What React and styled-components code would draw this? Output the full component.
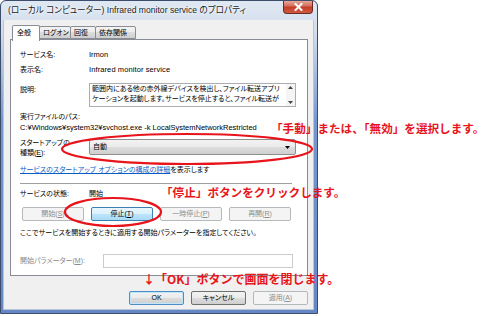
import React from "react";
import styled, { createGlobalStyle } from "styled-components";

const Global = createGlobalStyle`
  html, body { margin: 0; padding: 0; background: #fff; }
  body { font-family: "Liberation Sans", "Noto Sans CJK JP", sans-serif; color: #000; }
  #root { width: 493px; height: 316px; overflow: hidden; }
`;

const Page = styled.div`
  position: relative;
  width: 493px;
  height: 316px;
  background: #fff;
  display: flex;
  align-items: flex-start;
  overflow: hidden;
`;

const Window = styled.div`
  width: 318px;
  height: 314px;
  box-sizing: border-box;
  display: flex;
  flex-direction: column;
  padding: 0 4px 3px 3px;
  border: 1px solid #3b4d6b;
  border-radius: 6px 6px 0 0;
  background: linear-gradient(
    to bottom,
    #dfe8f2 0,
    #d3deec 30px,
    #a9bfe0 70px,
    #7696cd 120px,
    #6687c5 100%
  );
`;

const TitleBar = styled.div`
  height: 19px;
  flex: none;
  display: flex;
  align-items: flex-start;
  padding-left: 4px;
`;

const TitleText = styled.div`
  font-size: 8.6px;
  line-height: 19px;
  font-feature-settings: "palt";
  color: #1b1b1b;
  white-space: nowrap;
  text-shadow: 0 0 4px #fff, 0 0 2px #fff;
`;

const CloseBtn = styled.div`
  margin-left: auto;
  width: 30px;
  height: 13px;
  box-sizing: border-box;
  border: 1px solid #6d2a24;
  border-top: none;
  border-radius: 0 0 4px 4px;
  background: linear-gradient(#e7a898 0, #d4715e 40%, #c23e27 52%, #cf5a3f 100%);
  display: flex;
  align-items: center;
  justify-content: center;
`;

const Client = styled.div`
  flex: 1;
  background: #f0f0f0;
  display: flex;
  flex-direction: column;
  padding: 5px 5px 0 6px;
  border-left: 1px solid #b7c6da;
  border-right: 1px solid #b7c6da;
  border-bottom: 1px solid #b7c6da;
  margin-left: -1px;
  margin-right: -1px;
`;

const TabStrip = styled.div`
  height: 15px;
  display: flex;
  align-items: flex-end;
  padding-left: 2px;
  position: relative;
  z-index: 1;
  margin-bottom: -1px;
`;

const Tab = styled.div`
  box-sizing: border-box;
  width: ${(p) => p.$w}px;
  height: ${(p) => (p.$active ? 16 : 13)}px;
  margin-left: ${(p) => (p.$first ? 0 : -1)}px;
  border: 1px solid #898c95;
  border-bottom: ${(p) => (p.$active ? "none" : "1px solid #898c95")};
  border-radius: 2px 2px 0 0;
  background: ${(p) =>
    p.$active ? "#fff" : "linear-gradient(#f3f3f3 0, #ebebeb 45%, #dddddd 50%, #cfcfcf 100%)"};
  font-size: 7px;
  font-feature-settings: "palt";
  line-height: ${(p) => (p.$active ? 14 : 11)}px;
  padding-left: ${(p) => (p.$active ? 4 : 3)}px;
  white-space: nowrap;
  position: relative;
  z-index: ${(p) => (p.$active ? 2 : 1)};
  align-self: flex-end;
  margin-bottom: ${(p) => (p.$active ? -1 : 1)}px;
`;

const Panel = styled.div`
  box-sizing: border-box;
  height: 237px;
  flex: none;
  border: 1px solid #898c95;
  background: #fff;
  padding: 10px 11px 0 9px;
  display: flex;
  flex-direction: column;
  font-size: 7px;
  font-feature-settings: "palt";
`;

const Row = styled.div`
  display: flex;
  align-items: flex-start;
  margin-top: ${(p) => p.$mt || 0}px;
  min-height: ${(p) => p.$h || 10}px;
  line-height: 10px;
  white-space: nowrap;
  padding-left: ${(p) => p.$pl || 0}px;
  gap: ${(p) => p.$gap || 0}px;
`;

const Label = styled.div`
  width: ${(p) => p.$w || 69}px;
  flex: none;
  margin-top: ${(p) => p.$mt || 0}px;
  color: ${(p) => (p.$disabled ? "#8a8a8a" : "#000")};
`;

const Value = styled.div`
  white-space: nowrap;
`;

const Latin = styled.span`
  font-size: 7.5px;
  letter-spacing: ${(p) => p.$ls || 0}px;
`;

const TextArea = styled.div`
  position: relative;
  box-sizing: border-box;
  width: 207px;
  height: 24px;
  border: 1px solid #abadb3;
  background: #fff;
  padding: 0 11px 0 2px;
  overflow: hidden;
`;

const Line = styled.div`
  height: 10px;
  line-height: 10px;
  white-space: nowrap;
  overflow: hidden;
`;

const ScrollBar = styled.div`
  position: absolute;
  top: 0;
  right: 0;
  bottom: 0;
  width: 9px;
  background: #f4f4f4;
  display: flex;
  flex-direction: column;
  justify-content: space-between;
  align-items: center;
  padding: 2px 0;
  box-sizing: border-box;
`;

const Combo = styled.div`
  box-sizing: border-box;
  width: 207px;
  height: 16px;
  border: 1px solid #8e8f8f;
  border-radius: 2px;
  background: linear-gradient(#f2f2f2 0, #ebebeb 49%, #dddddd 50%, #cfcfcf 100%);
  display: flex;
  align-items: center;
  justify-content: space-between;
  padding: 0 5px 0 3px;
  line-height: 14px;
`;

const Link = styled.span`
  color: #0b5cc4;
  text-decoration: underline;
`;

const Separator = styled.div`
  margin-top: 8px;
  width: 272px;
  height: 0;
  border-top: 1px solid #a0a0a0;
  border-bottom: 1px solid #fff;
`;

const Btn = styled.div`
  box-sizing: border-box;
  width: ${(p) => p.$w}px;
  height: 14px;
  flex: none;
  border: 1px solid
    ${(p) => (p.$variant === "hot" ? "#3c7fb1" : p.$variant === "default" ? "#4d8dc6" : p.$disabled ? "#b5b9bc" : "#707070")};
  border-radius: 2px;
  background: ${(p) =>
    p.$variant === "hot"
      ? "linear-gradient(#eaf6fd 0, #d9f0fc 49%, #bee6fd 50%, #a7d9f5 100%)"
      : p.$disabled
      ? "#f4f4f4"
      : "linear-gradient(#f2f2f2 0, #ebebeb 49%, #dddddd 50%, #cfcfcf 100%)"};
  box-shadow: ${(p) => (p.$variant === "default" ? "inset 0 0 0 1px #bfe6fa" : "none")};
  color: ${(p) => (p.$disabled ? "#8d8d8d" : "#000")};
  font-size: 7px;
  line-height: 12px;
  text-align: center;
  white-space: nowrap;
  font-feature-settings: "palt";
`;

const Input = styled.div`
  box-sizing: border-box;
  width: 190px;
  height: 14px;
  border: 1px solid #c9cbce;
  background: #fff;
`;

const BottomBar = styled.div`
  margin-top: 15px;
  display: flex;
  justify-content: flex-end;
  gap: 7px;
`;

const Note = styled.div`
  position: absolute;
  left: ${(p) => p.$x}px;
  top: ${(p) => p.$y}px;
  font-family: "Noto Sans CJK JP", sans-serif;
  font-weight: 700;
  font-size: ${(p) => p.$fs || 11.6}px;
  line-height: 16px;
  color: #e8141c;
  white-space: nowrap;
`;

const Overlay = styled.svg`
  position: absolute;
  left: 0;
  top: 0;
  pointer-events: none;
`;

const Tri = ({ up }) => (
  <svg width="5" height="3" viewBox="0 0 5 3">
    <path d={up ? "M0 3 L2.5 0 L5 3 Z" : "M0 0 L5 0 L2.5 3 Z"} fill="#444" />
  </svg>
);

export default function App() {
  return (
    <>
      <Global />
      <Page>
        <Window>
          <TitleBar>
            <TitleText>(ローカル コンピューター) Infrared monitor service のプロパティ</TitleText>
            <CloseBtn>
              <svg width="9" height="8" viewBox="0 0 9 8">
                <path d="M1.5 1 L7.5 7 M7.5 1 L1.5 7" stroke="#fff" strokeWidth="2" strokeLinecap="square" />
              </svg>
            </CloseBtn>
          </TitleBar>
          <Client>
            <TabStrip>
              <Tab $w={28} $active $first>全般</Tab>
              <Tab $w={32}>ログオン</Tab>
              <Tab $w={26}>回復</Tab>
              <Tab $w={41}>依存関係</Tab>
            </TabStrip>
            <Panel>
              <Row>
                <Label>サービス名:</Label>
                <Value><Latin>Irmon</Latin></Value>
              </Row>
              <Row $mt={5}>
                <Label>表示名:</Label>
                <Value><Latin $ls={0.1}>Infrared monitor service</Latin></Value>
              </Row>
              <Row $mt={8} $h={24}>
                <Label $mt={2}>説明:</Label>
                <TextArea>
                  <Line>範囲内にある他の赤外線デバイスを検出し、ファイル転送アプリ</Line>
                  <Line>ケーションを起動します。サービスを停止すると、ファイル転送が</Line>
                  <ScrollBar>
                    <Tri up />
                    <Tri />
                  </ScrollBar>
                </TextArea>
              </Row>
              <Row $mt={5}>
                <Label $w={200}>実行ファイルのパス:</Label>
              </Row>
              <Row $mt={1}>
                <Value><Latin>C:¥Windows¥system32¥svchost.exe -k LocalSystemNetworkRestricted</Latin></Value>
              </Row>
              <Row $mt={6} $h={16}>
                <Label $mt={-1}>
                  スタートアップの
                  <br />
                  種類(<u>E</u>):
                </Label>
                <Combo>
                  <span>自動</span>
                  <svg width="5" height="3" viewBox="0 0 5 3">
                    <path d="M0 0 L5 0 L2.5 3 Z" fill="#000" />
                  </svg>
                </Combo>
              </Row>
              <Row $mt={7}>
                <Value>
                  <Link>サービスのスタートアップ オプションの構成の詳細</Link>を表示します
                </Value>
              </Row>
              <Separator />
              <Row $mt={4}>
                <Label>サービスの状態:</Label>
                <Value>開始</Value>
              </Row>
              <Row $mt={8} $h={14} $pl={2} $gap={7}>
                <Btn $w={62} $disabled>開始(<u>S</u>)</Btn>
                <Btn $w={62} $variant="hot">停止(<u>T</u>)</Btn>
                <Btn $w={62} $disabled>一時停止(<u>P</u>)</Btn>
                <Btn $w={62} $disabled>再開(<u>R</u>)</Btn>
              </Row>
              <Row $mt={7}>
                <Value>ここでサービスを開始するときに適用する開始パラメーターを指定してください。</Value>
              </Row>
              <Row $mt={16} $h={14}>
                <Label $w={83} $mt={2} $disabled>
                  開始パラメーター(<u>M</u>):
                </Label>
                <Input />
              </Row>
            </Panel>
            <BottomBar>
              <Btn $w={55} $variant="default">OK</Btn>
              <Btn $w={55}>キャンセル</Btn>
              <Btn $w={55} $disabled>適用(<u>A</u>)</Btn>
            </BottomBar>
          </Client>
        </Window>

        <Overlay width="493" height="316" viewBox="0 0 493 316">
          <ellipse cx="187" cy="149" rx="125" ry="15" fill="none" stroke="#e8141c" strokeWidth="2.2" />
          <ellipse cx="113" cy="212" rx="48" ry="14" fill="none" stroke="#e8141c" strokeWidth="2.2" />
        </Overlay>

        <Note $x={271} $y={120}>「手動」または、「無効」を選択します。</Note>
        <Note $x={161} $y={184}>「停止」ボタンをクリックします。</Note>
        <Note $x={143} $y={271} $fs={12}>↓「OK」ボタンで画面を閉じます。</Note>
      </Page>
    </>
  );
}
